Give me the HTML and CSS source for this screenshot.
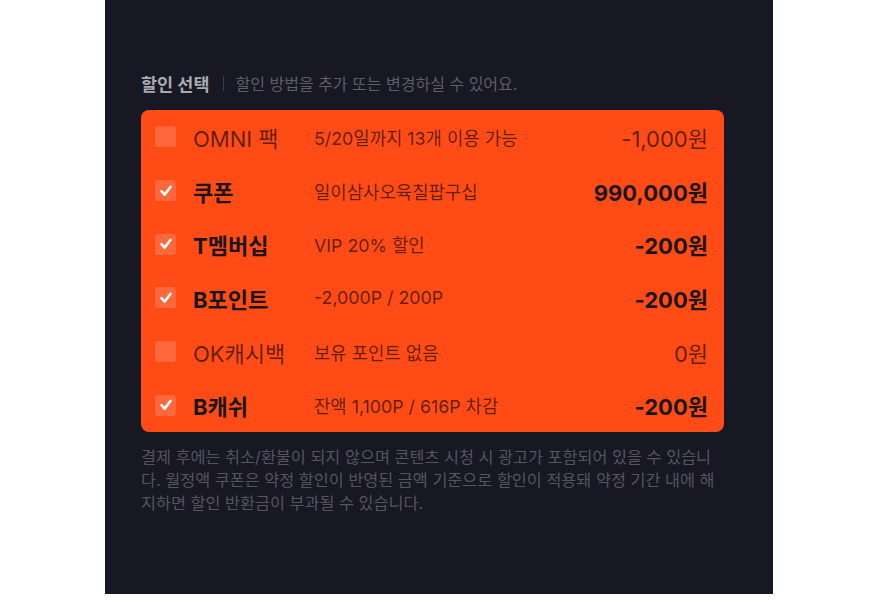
FILE: index.html
```html
<!DOCTYPE html>
<html lang="ko">
<head>
<meta charset="utf-8">
<link rel="stylesheet" href="styles.css">
</head>
<body>
<div class="panel">
  <div class="content">
    <div class="head">
      <span class="head-title">할인 선택</span>
      <span class="head-sep"></span>
      <span class="head-sub">할인 방법을 추가 또는 변경하실 수 있어요.</span>
    </div>
    <div class="box">
      <div class="row">
        <span class="cb"></span>
        <span class="label">OMNI 팩</span>
        <span class="desc">5/20일까지 13개 이용 가능</span>
        <span class="amt">-1,000원</span>
      </div>
      <div class="row on">
        <span class="cb"><svg viewBox="0 0 20 20" width="20" height="20"><path d="M5.5 10.2 L8.6 13.6 L14.6 5.8" fill="none" stroke="#fff" stroke-width="2.6" stroke-linecap="round" stroke-linejoin="round"/></svg></span>
        <span class="label">쿠폰</span>
        <span class="desc">일이삼사오육칠팝구십</span>
        <span class="amt">990,000원</span>
      </div>
      <div class="row on">
        <span class="cb"><svg viewBox="0 0 20 20" width="20" height="20"><path d="M5.5 10.2 L8.6 13.6 L14.6 5.8" fill="none" stroke="#fff" stroke-width="2.6" stroke-linecap="round" stroke-linejoin="round"/></svg></span>
        <span class="label">T멤버십</span>
        <span class="desc">VIP 20% 할인</span>
        <span class="amt">-200원</span>
      </div>
      <div class="row on">
        <span class="cb"><svg viewBox="0 0 20 20" width="20" height="20"><path d="M5.5 10.2 L8.6 13.6 L14.6 5.8" fill="none" stroke="#fff" stroke-width="2.6" stroke-linecap="round" stroke-linejoin="round"/></svg></span>
        <span class="label">B포인트</span>
        <span class="desc">-2,000P / 200P</span>
        <span class="amt">-200원</span>
      </div>
      <div class="row">
        <span class="cb"></span>
        <span class="label">OK캐시백</span>
        <span class="desc">보유 포인트 없음</span>
        <span class="amt">0원</span>
      </div>
      <div class="row on">
        <span class="cb"><svg viewBox="0 0 20 20" width="20" height="20"><path d="M5.5 10.2 L8.6 13.6 L14.6 5.8" fill="none" stroke="#fff" stroke-width="2.6" stroke-linecap="round" stroke-linejoin="round"/></svg></span>
        <span class="label">B캐쉬</span>
        <span class="desc">잔액 1,100P / 616P 차감</span>
        <span class="amt">-200원</span>
      </div>
    </div>
    <p class="note">결제 후에는 취소/환불이 되지 않으며 콘텐츠 시청 시 광고가 포함되어 있을 수 있습니다. 월정액 쿠폰은 약정 할인이 반영된 금액 기준으로 할인이 적용돼 약정 기간 내에 해지하면 할인 반환금이 부과될 수 있습니다.</p>
  </div>
</div>
</body>
</html>
```

FILE: styles.css
```css
html, body {
  margin: 0;
  padding: 0;
  background: #ffffff;
}
body {
  font-family: Inter, "Noto Sans CJK KR", sans-serif;
}
.panel {
  margin-left: 105px;
  width: 668px;
  height: 594px;
  background: #181724;
  box-sizing: border-box;
  padding: 70px 49px 0 36px;
}
.content {
  width: 583px;
}
.head {
  display: flex;
  align-items: center;
  height: 26px;
}
.head-title {
  font-size: 17.5px;
  font-weight: 700;
  color: #a9a9b1;
}
.head-sep {
  width: 1px;
  height: 15px;
  background: #3b3a47;
  margin: 0 12px 0 13px;
}
.head-sub {
  font-size: 16px;
  color: #5e5d69;
}
.box {
  margin-top: 14px;
  background: #ff4c17;
  border-radius: 8px;
  height: 322px;
  display: flex;
  flex-direction: column;
  box-sizing: border-box;
  padding: 0 16px 0 14px;
}
.row {
  flex: 1;
  display: flex;
  align-items: center;
  color: rgba(40, 12, 8, 0.72);
}
.cb {
  width: 21px;
  height: 21px;
  border-radius: 3px;
  background: rgba(255, 255, 255, 0.16);
  flex: none;
  display: flex;
  align-items: center;
  justify-content: center;
}
.label {
  margin-left: 17px;
  width: 121px;
  font-size: 22px;
  flex: none;
}
.desc {
  font-size: 17.8px;
  flex: 1;
}
.amt {
  font-size: 22px;
}
.row.on .label,
.row.on .amt {
  font-weight: 700;
  color: #1b1515;
}
.note {
  margin: 14px 0 0;
  font-size: 16.3px;
  line-height: 23px;
  color: #55545f;
  word-break: break-all;
}
```
